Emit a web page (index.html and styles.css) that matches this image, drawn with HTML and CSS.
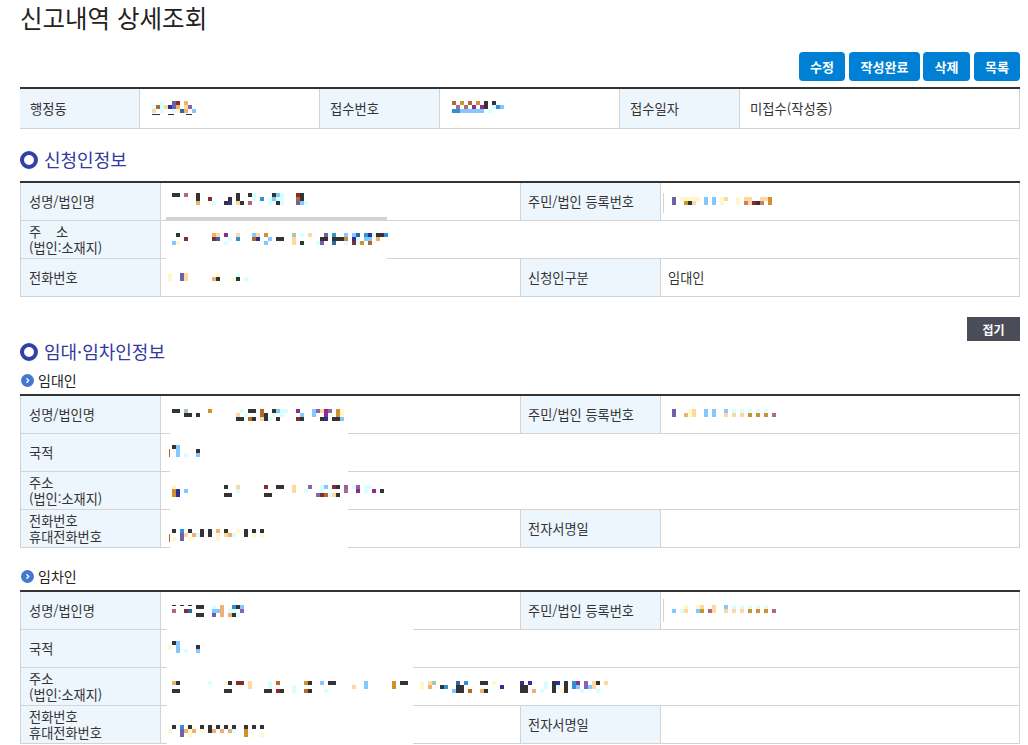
FILE: index.html
```html
<!DOCTYPE html>
<html lang="ko">
<head>
<meta charset="utf-8">
<title>신고내역 상세조회</title>
<link rel="stylesheet" href="styles.css">
</head>
<body>
<main class="page">
  <h1 class="title">신고내역 상세조회</h1>
  <div class="actions">
    <button class="btn w46">수정</button>
    <button class="btn w71">작성완료</button>
    <button class="btn w47">삭제</button>
    <button class="btn w46">목록</button>
  </div>
  <table class="tbl top">
    <colgroup><col class="c120"><col class="c180"><col class="c120"><col class="c180"><col class="c120"><col class="c280"></colgroup>
    <tr>
      <th>행정동</th><td></td>
      <th>접수번호</th><td></td>
      <th>접수일자</th><td>미접수(작성중)</td>
    </tr>
  </table>
  <h2 class="sec"><span class="ring"></span>신청인정보</h2>
  <table class="tbl">
    <colgroup><col class="c141"><col class="c360"><col class="c140"><col class="c359"></colgroup>
    <tr><th>성명/법인명</th><td></td><th>주민/법인 등록번호</th><td></td></tr>
    <tr><th>주&nbsp;&nbsp;&nbsp;&nbsp;소<br>(법인:소재지)</th><td colspan="3"></td></tr>
    <tr><th>전화번호</th><td></td><th>신청인구분</th><td>임대인</td></tr>
  </table>
  <div class="fold-row"><button class="fold">접기</button></div>
  <h2 class="sec sec2"><span class="ring"></span>임대·임차인정보</h2>
  <h3 class="sub"><svg class="dot" viewBox="0 0 13 13"><circle cx="6.5" cy="6.5" r="6.5" fill="#4478d0"/><path d="M5.5 4.2l2.2 2.3-2.2 2.3" fill="none" stroke="#fff" stroke-width="1.3"/></svg>임대인</h3>
  <table class="tbl">
    <colgroup><col class="c141"><col class="c360"><col class="c140"><col class="c359"></colgroup>
    <tr><th>성명/법인명</th><td></td><th>주민/법인 등록번호</th><td></td></tr>
    <tr><th>국적</th><td colspan="3"></td></tr>
    <tr><th>주소<br>(법인:소재지)</th><td colspan="3"></td></tr>
    <tr><th>전화번호<br>휴대전화번호</th><td></td><th>전자서명일</th><td></td></tr>
  </table>
  <h3 class="sub sub2"><svg class="dot" viewBox="0 0 13 13"><circle cx="6.5" cy="6.5" r="6.5" fill="#4478d0"/><path d="M5.5 4.2l2.2 2.3-2.2 2.3" fill="none" stroke="#fff" stroke-width="1.3"/></svg>임차인</h3>
  <table class="tbl">
    <colgroup><col class="c141"><col class="c360"><col class="c140"><col class="c359"></colgroup>
    <tr><th>성명/법인명</th><td></td><th>주민/법인 등록번호</th><td></td></tr>
    <tr><th>국적</th><td colspan="3"></td></tr>
    <tr><th>주소<br>(법인:소재지)</th><td colspan="3"></td></tr>
    <tr><th>전화번호<br>휴대전화번호</th><td></td><th>전자서명일</th><td></td></tr>
  </table>

  <svg class="redact" width="1028" height="745" viewBox="0 0 1028 745" aria-hidden="true">
    <!-- white erasures -->
    <path class="w" d="M166 221h221v38H166zM170 433h178v115H170zM167 629h246v116H167z"/>
    <path class="s" d="M166 218.5h221"/>
    <path class="e1" d="M663 193v20M663 599v23"/>

    <g transform="translate(152 101)">
      <path class="a" d="M8 2h4M0 6h4M8 6h4M8 10h4M20 10h4"/>
      <path class="v" d="M20 2h4M20 6h4"/><path class="r" d="M24 2h4"/><path class="p" d="M32 2h4M24 6h4M32 10h4"/>
      <path class="t" d="M4 6h4"/><path class="f" d="M12 6h4M32 6h4M0 10h4"/><path class="n" d="M16 6h4"/><path class="u" d="M36 6h4"/>
      <path class="c" d="M24 10h4"/><path class="d" d="M28 10h4"/><path class="l" d="M40 10h4"/>
      <path class="kt" d="M0 13.5h8M16 13.5h6M34 13.5h6"/>
    </g>
    <g transform="translate(452 101)">
      <path class="t" d="M0 2h4M16 2h4"/><path class="o" d="M8 2h4M24 2h4"/><path class="k" d="M32 2h4M40 2h4M32 6h4"/>
      <path class="q" d="M4 6h4M12 6h4"/><path class="m" d="M20 6h4M28 6h4"/><path class="a" d="M40 6h4M36 10h4"/><path class="b" d="M44 6h4M0 10h8"/><path class="l" d="M48 6h4M8 10h24"/>
    </g>

    <g transform="translate(172 193)">
      <path class="k" d="M0 2h8M24 2h4M64 2h4M76 2h4M100 2h4M128 2h4M24 6h4M56 6h4M64 6h4M128 6h4M52 10h4M60 10h-4M68 10h4M104 10h4"/>
      <path class="q" d="M12 2h4M76 10h4"/><path class="a" d="M80 2h4M108 2h4M80 6h4M96 6h4M104 6h8M40 10h4M96 10h4M108 10h4M132 10h4"/>
      <path class="l" d="M104 2h4M100 6h4M128 10h4"/><path class="r" d="M124 2h4M36 6h4"/><path class="t" d="M124 6h4"/><path class="b" d="M88 6h4"/>
      <path class="p" d="M24 10h4"/><path class="n" d="M56 10h4"/><path class="f" d="M64 10h4"/><path class="v" d="M124 10h4"/>
    </g>
    <g transform="translate(672 197)">
      <path class="v" d="M0 2h4M0 6h4"/><path class="c" d="M8 2h20M48 2h4M64 2h4M48 6h4M64 6h4"/><path class="l" d="M32 2h4M40 2h4M32 6h4M40 6h4"/>
      <path class="f" d="M52 2h4M72 2h8M88 2h8M20 6h4M76 6h4"/><path class="o" d="M96 2h4M12 6h4M96 6h4"/><path class="k" d="M16 6h4M84 6h4"/>
      <path class="x" d="M72 6h4M88 6h4"/><path class="r" d="M80 6h4"/>
    </g>
    <g transform="translate(172 233)">
      <path class="k" d="M4 2h4M204 2h8M104 6h8M148 6h8M160 6h12M128 10h4"/>
      <path class="p" d="M40 2h4"/><path class="f" d="M44 2h4M64 2h4M84 2h4M136 2h4M120 6h4M120 10h4"/><path class="m" d="M52 2h4"/>
      <path class="l" d="M80 2h4M172 2h4M180 2h4M96 6h4M192 6h8M0 10h4M92 10h4"/><path class="o" d="M92 2h4M172 6h4M188 10h4"/><path class="g" d="M120 2h4"/>
      <path class="a" d="M128 2h4M200 2h4M56 6h4M184 6h4M52 10h4M144 10h4M172 10h4M184 10h4"/><path class="v" d="M152 2h4M148 10h4"/>
      <path class="b" d="M160 2h4M192 2h4M212 2h4M64 6h4"/><path class="d" d="M184 2h4M44 6h4M160 10h4"/><path class="n" d="M196 2h4M84 6h4M180 6h4"/>
      <path class="r" d="M12 6h4M40 6h4M180 10h4"/><path class="t" d="M80 6h4M196 10h4"/><path class="p" d="M204 6h4"/><path class="c" d="M4 10h4"/>
    </g>
    <g transform="translate(168 273)">
      <path class="c" d="M0 2h4M48 2h4M0 6h4M64 6h4"/><path class="v" d="M12 2h4M12 6h4"/><path class="f" d="M16 2h4M16 6h4"/>
      <path class="a" d="M68 2h4M76 6h4"/><path class="p" d="M44 6h4"/><path class="k" d="M48 6h4M68 6h4"/>
    </g>

    <g transform="translate(168 409)">
      <path class="k" d="M4 2h8M80 2h8M104 2h4M16 6h8M28 6h4M96 6h4M68 10h8M84 10h4M96 10h4M108 10h4M132 10h4M152 10h4M164 10h8"/>
      <path class="g" d="M16 2h4"/><path class="o" d="M40 2h4M168 2h4M168 6h4"/><path class="a" d="M72 2h4M112 2h8M76 6h4M104 6h4M112 6h4M100 10h4"/>
      <path class="t" d="M92 2h4M92 6h4M80 10h4"/><path class="l" d="M108 2h4M144 2h4M132 6h4M144 6h4M172 10h4"/><path class="m" d="M128 2h4M156 2h4M156 6h4"/>
      <path class="u" d="M148 2h4M160 2h4"/><path class="f" d="M152 2h4M68 6h4M92 10h4"/><path class="c" d="M172 2h4M172 6h4"/><path class="r" d="M128 10h4"/><path class="n" d="M156 10h4"/>
    </g>
    <g transform="translate(672 409)">
      <path class="v" d="M0 2h4M0 6h4"/><path class="c" d="M16 2h4M16 6h4"/><path class="f" d="M20 2h4M20 6h4M52 6h4M60 6h4M68 6h4"/>
      <path class="l" d="M32 2h4M40 2h4M52 2h4M32 6h4M40 6h4"/><path class="a" d="M60 2h4M68 2h4M76 2h4M84 2h4M92 2h4"/>
      <path class="p" d="M12 6h4"/><path class="o" d="M76 6h4M84 6h4M92 6h4"/><path class="q" d="M100 6h4"/>
    </g>
    <g transform="translate(168 445)">
      <path class="k" d="M4 2h4M28 6h4"/><path class="l" d="M8 2h4M8 6h4M8 10h4M28 10h4"/><path class="a" d="M16 10h4"/><path class="t1" d="M1.5 4v8"/>
    </g>
    <g transform="translate(168 485)">
      <path class="c" d="M4 2h4"/><path class="k" d="M56 2h4M108 2h8M168 10h4M56 10h8M96 10h8M168 2h4"/>
      <path class="f" d="M68 2h4M124 2h4M124 6h4M164 10h4"/><path class="r" d="M96 2h4M164 2h4M152 10h4"/><path class="u" d="M140 2h4M176 2h4M188 2h4M148 10h4"/>
      <path class="a" d="M152 2h4M184 2h4M196 2h8M68 6h4M136 6h4M152 6h4M196 6h4M160 10h4"/><path class="l" d="M156 2h4M16 6h4"/>
      <path class="o" d="M4 6h4M4 10h4"/><path class="n" d="M8 6h4M8 10h4"/><path class="q" d="M176 6h4"/><path class="m" d="M188 6h4M204 6h4"/><path class="k" d="M212 6h4"/><path class="t" d="M156 10h4"/>
    </g>
    <g transform="translate(168 529)">
      <path class="k" d="M4 2h4M20 2h4M32 2h4M40 2h4M56 2h4M76 2h4M84 2h4M92 2h4M32 6h4M40 6h4M76 6h4"/>
      <path class="b" d="M12 2h4"/><path class="p" d="M48 2h4M24 6h4M60 6h4"/><path class="c" d="M68 2h4M48 6h4M84 6h4M92 6h4M4 10h4M20 10h4M48 10h4"/>
      <path class="v" d="M12 6h4M12 10h4"/><path class="f" d="M16 6h4M56 6h4"/><path class="a" d="M28 6h4M64 6h4"/><path class="t1" d="M1.5 5v8"/>
    </g>

    <g transform="translate(172 605)">
      <path class="kt" d="M0 .5h4M8 .5h4M16 .5h4"/>
      <path class="k" d="M24 2h8M64 2h4M24 10h8M60 10h4"/><path class="a" d="M40 2h4M56 6h8M64 10h4"/><path class="p" d="M48 2h4M48 6h4M48 10h4M56 10h4"/>
      <path class="b" d="M60 2h4"/><path class="l" d="M68 2h4M40 6h8"/><path class="q" d="M0 6h4"/><path class="r" d="M12 6h4"/><path class="d" d="M16 6h4"/><path class="u" d="M68 6h4"/><path class="v" d="M40 10h4"/>
    </g>
    <g transform="translate(672 605)">
      <path class="c" d="M12 2h4M24 2h4"/><path class="f" d="M28 2h4M40 2h4M12 6h4M40 6h4M52 6h4M60 6h4M68 6h4"/>
      <path class="l" d="M52 2h4M0 6h4M24 6h4"/><path class="a" d="M60 2h4M68 2h4M76 2h4M84 2h4M92 2h4M8 6h4"/>
      <path class="o" d="M28 6h4M76 6h4M84 6h4M92 6h4"/><path class="q" d="M36 6h4M100 6h4"/>
    </g>
    <g transform="translate(168 641)">
      <path class="k" d="M4 2h4M28 6h4"/><path class="l" d="M8 2h4M8 6h4M8 10h4M28 10h4"/><path class="c" d="M0 6h4"/><path class="a" d="M16 10h4"/>
    </g>
    <g transform="translate(172 681)">
      <path class="p" d="M0 2h4"/>
      <path class="k" d="M4 2h4M56 2h4M136 2h4M156 2h8M228 2h8M308 2h8M380 2h4M392 2h4M424 2h4M268 6h4M284 6h8M348 6h8M380 6h4M392 6h4M0 10h8M52 10h8M92 10h8M108 10h4M136 10h4M284 10h8M300 10h-4M312 10h4M348 10h8M380 10h4M392 10h4"/>
      <path class="a" d="M36 2h4M96 2h4M372 2h4M96 6h4M120 6h4M372 6h4M384 6h4M120 10h4M152 10h4M368 10h4M408 10h4M424 10h4"/>
      <path class="c" d="M52 2h4M248 2h4M320 2h4M248 6h4M388 10h4"/><path class="r" d="M64 2h8M104 10h4"/><path class="f" d="M76 2h4M256 2h4M76 6h4M180 6h4M420 2h4M432 2h4M420 6h4"/>
      <path class="t" d="M104 2h4M132 10h4M296 10h4"/><path class="o" d="M132 2h4M220 2h4M220 6h4"/><path class="l" d="M148 2h4M192 2h4M192 6h4M280 10h4M404 6h4M416 6h4"/>
      <path class="g" d="M260 2h4"/><path class="d" d="M284 2h4"/><path class="b" d="M292 2h4M272 6h4M400 2h4M400 6h4"/><path class="n" d="M348 2h4M356 2h4M328 6h4M384 2h4"/>
      <path class="m" d="M404 2h4"/><path class="u" d="M412 2h4M412 6h4"/><path class="p" d="M256 6h4M360 10h4M308 10h4"/>
    </g>
    <g transform="translate(172 725)">
      <path class="k" d="M0 2h4M16 2h4M28 2h4M36 2h4M44 2h4M52 2h4M60 2h4M72 2h4M80 2h4M88 2h4M36 6h4"/>
      <path class="b" d="M8 2h4"/><path class="c" d="M-4 6h4M16 6h4M28 6h4M16 10h4M88 10h4"/><path class="v" d="M8 6h4M8 10h4"/>
      <path class="p" d="M12 6h4M20 6h4M40 6h4M48 6h4M56 6h4"/><path class="a" d="M60 6h4"/><path class="o" d="M72 6h4M72 10h4"/>
    </g>
  </svg>
</main>
</body>
</html>
```
FILE: styles.css
```css
*{box-sizing:border-box}
html,body{margin:0;padding:0;background:#fff;overflow:hidden;height:745px}
body{font-family:"Noto Sans CJK KR","Noto Sans",sans-serif;color:#333}
.page{padding:0 8px 0 20px}
.title{margin:0;height:52px;font-size:24.5px;font-weight:400;line-height:36px;color:#222}
.actions{display:flex;justify-content:flex-end;height:35px}
.btn{height:29px;border:0;border-radius:4px;background:#0080d4;color:#fff;font:700 13px "Noto Sans CJK KR",sans-serif;padding:0}
.btn+.btn{margin-left:4px}
.w71+.w47{margin-left:3px}
.w46{width:46px}.w71{width:71px}.w47{width:47px}
.tbl{width:1000px;table-layout:fixed;border-collapse:separate;border-spacing:0;border-top:2px solid #333;font-size:13.2px}
.tbl th,.tbl td{height:38px;border:solid #d3d3d3;border-width:0 1px 1px 0;padding:0 7px;text-align:left;line-height:16px}
.tbl th{background:#edf5fd;font-weight:400;color:#333}
.tbl th:first-child{border-left-width:1px;padding-left:8px}
.top{font-size:13.3px}
.tbl.top th,.tbl.top td{height:40px;padding-left:10px}
.tbl.top th:first-child{border-left-width:0;padding-left:10px}
.c120{width:120px}.c180{width:180px}.c280{width:280px}
.c141{width:141px}.c360{width:360px}.c140{width:140px}.c359{width:359px}
.sec{display:flex;align-items:center;gap:6px;margin:0;font-size:18px;font-weight:400;color:#333a9e;height:52px;padding-top:8px}
.ring{width:18px;height:18px;border:4.5px solid #333fa8;border-radius:50%;background:#fff;margin-top:2px}
.fold-row{display:flex;justify-content:flex-end;margin-top:20px;height:24px}
.fold{width:53px;height:24px;border:0;background:#4a4d58;color:#fff;font:700 12px "Noto Sans CJK KR",sans-serif;padding:0}
.sec.sec2{height:20px;padding-top:0;margin-bottom:2px}
.sub{display:flex;align-items:center;gap:5px;margin:0;padding-top:2px;font-size:14px;font-weight:400;color:#222;height:31px}
.sub2{margin-top:11px}
.dot{width:13px;height:13px;margin:2px -1px 0 1px}

.redact{position:absolute;left:0;top:0;pointer-events:none}
.redact path{fill:none;stroke-width:4;shape-rendering:crispEdges}
.redact .w{fill:#fff;stroke:none}
.redact .s{stroke:#d3d3d3}
.redact .e1{stroke:#d3d3d3;stroke-width:1}
.redact .kt{stroke:#333;stroke-width:1}
.redact .t1{stroke:#b06a30;stroke-width:1}
.redact .k{stroke:#333}
.redact .r{stroke:#852c2c}
.redact .o{stroke:#d09030}
.redact .t{stroke:#b06a30}
.redact .p{stroke:#f0b070}
.redact .f{stroke:#ffd8a0}
.redact .c{stroke:#fff8cc}
.redact .a{stroke:#d8ffff}
.redact .l{stroke:#85c8ff}
.redact .b{stroke:#3090d8}
.redact .d{stroke:#2a68a8}
.redact .n{stroke:#303090}
.redact .v{stroke:#7060a8}
.redact .u{stroke:#9060b0}
.redact .m{stroke:#8c2c90}
.redact .g{stroke:#a8c8a8}
.redact .q{stroke:#b06a78}
.redact .x{stroke:#c88060}
```
